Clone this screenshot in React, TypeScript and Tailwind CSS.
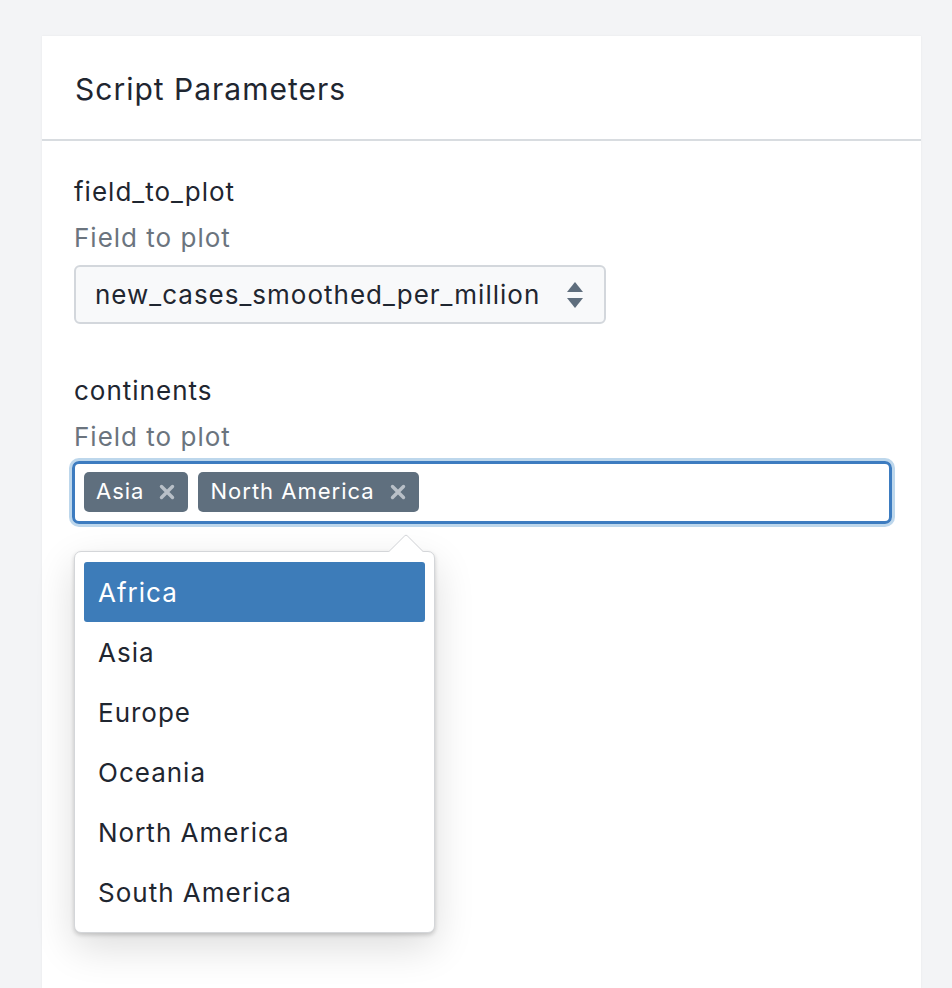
import React from 'react';

const options = ['Africa', 'Asia', 'Europe', 'Oceania', 'North America', 'South America'];
const selected = ['Asia', 'North America'];

const SortIcon = () => (
  <svg width="18" height="28" viewBox="0 0 18 28" fill="#5f6e7d">
    <path d="M9 1 L17 11 H1 Z" strokeLinejoin="round" />
    <path d="M9 27 L17 17 H1 Z" strokeLinejoin="round" />
  </svg>
);

const Tag: React.FC<{ label: string }> = ({ label }) => (
  <span className="flex items-center h-10 rounded-[5px] bg-[#5f6f7e] pl-3 pr-[13px] text-[22px] tracking-[1px] text-white gap-[15px]">
    {label}
    <svg width="16" height="16" viewBox="0 0 16 16" stroke="#b9c0c8" strokeWidth="3.4" strokeLinecap="round">
      <path d="M2.5 2.5 L13.5 13.5 M13.5 2.5 L2.5 13.5" />
    </svg>
  </span>
);

export default function App() {
  return (
    <div className="min-h-[988px] bg-[#f3f4f6] pt-9 px-[42px] pr-[31px] font-['Inter',sans-serif] text-[#1f2630]">
      <div className="bg-white min-h-[952px] shadow-[0_0_2px_rgba(0,0,0,0.06)]">
        <div className="h-[105px] border-b-2 border-[#d8dce0] flex items-center px-[33px] pt-[3px]">
          <h1 className="text-[30px] tracking-[1px] leading-none">Script Parameters</h1>
        </div>

        <div className="px-[32px] pt-[34px] text-[26px] tracking-[1px]">
          <div className="leading-[34px]">field_to_plot</div>
          <div className="leading-[34px] text-[#6b747e] mt-[12px]">Field to plot</div>
          <div className="mt-[10px] w-[532px] h-[59px] rounded-[6px] border-2 border-[#d3d7dc] bg-[#f8f9fa] flex items-center justify-between pl-[19px] pr-[20px]">
            <span>new_cases_smoothed_per_million</span>
            <SortIcon />
          </div>

          <div className="leading-[34px] mt-[50px]">continents</div>
          <div className="leading-[34px] text-[#6b747e] mt-[12px]">Field to plot</div>
          <div className="relative mt-[7px] -ml-[2px] w-[820px]">
            <div className="h-[63px] rounded-[7px] border-[3px] border-[#3d7cc0] ring-[3px] ring-[#bdd7ec] flex items-center gap-[10px] px-[9px] pb-[2px]">
              {selected.map((s) => (
                <Tag key={s} label={s} />
              ))}
            </div>

            <div className="absolute left-[2px] top-[90px] w-[361px] rounded-[7px] border border-[#d4d6d9] bg-white shadow-[0_14px_40px_rgba(0,0,0,0.14),0_2px_4px_rgba(0,0,0,0.18)] px-[9px] pt-[10px] pb-[10px]">
              <div className="absolute -top-[19px] left-[312px] w-[38px] h-[19px] overflow-hidden">
                <div className="absolute left-[6px] top-[6px] w-[26px] h-[26px] rotate-45 bg-white border-l border-t border-[#d4d6d9] rounded-tl-[3px]" />
              </div>
              {options.map((o, i) => (
                <div
                  key={o}
                  className={`h-[60px] flex items-center px-[14px] rounded-[3px] ${
                    i === 0 ? 'bg-[#3d7cb9] text-white' : 'text-[#1f2630]'
                  }`}
                >
                  {o}
                </div>
              ))}
            </div>
          </div>
        </div>
      </div>
    </div>
  );
}
